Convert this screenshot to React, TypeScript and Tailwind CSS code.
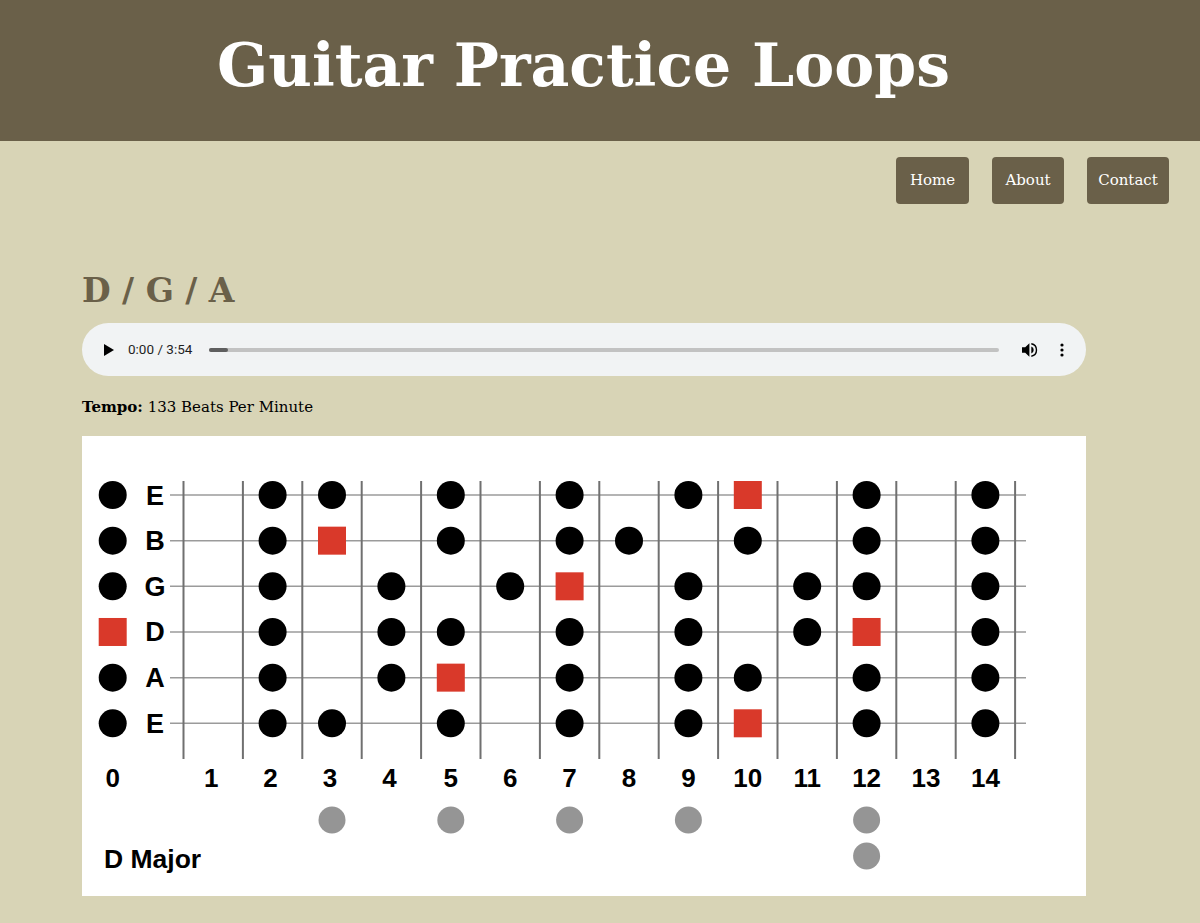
import React from 'react'

const serif = { fontFamily: '"DejaVu Serif", Georgia, serif' }
const sans = { fontFamily: '"Liberation Sans", Arial, sans-serif' }

const fretX = (i: number) => 101.5 + 59.4 * i
const noteX = (n: number) => (n === 0 ? 30.7 : fretX(n) - 29.7)
const stringY = (s: number) => 59 + 45.66 * s

// D major, high E string first. roots drawn as squares
const strings = [
    { name: 'E', notes: [0, 2, 3, 5, 7, 9, 10, 12, 14], roots: [10] },
    { name: 'B', notes: [0, 2, 3, 5, 7, 8, 10, 12, 14], roots: [3] },
    { name: 'G', notes: [0, 2, 4, 6, 7, 9, 11, 12, 14], roots: [7] },
    { name: 'D', notes: [0, 2, 4, 5, 7, 9, 11, 12, 14], roots: [0, 12] },
    { name: 'A', notes: [0, 2, 4, 5, 7, 9, 10, 12, 14], roots: [5] },
    { name: 'E', notes: [0, 2, 3, 5, 7, 9, 10, 12, 14], roots: [10] },
]

function Fretboard() {
    return (
        <svg width="1004" height="460" viewBox="0 0 1004 460" className="block">
            {strings.map((s, i) => (
                <line key={'s' + i} x1={88} x2={944} y1={stringY(i)} y2={stringY(i)} stroke="#9b9b9b" strokeWidth={1.5} />
            ))}
            {Array.from({ length: 15 }, (_, i) => (
                <line key={'f' + i} x1={fretX(i)} x2={fretX(i)} y1={45} y2={323} stroke="#707070" strokeWidth={2} />
            ))}
            {strings.map((s, i) => (
                <g key={'n' + i}>
                    <text x={73} y={stringY(i) + 9.5} textAnchor="middle" fontSize={27} fontWeight={700} style={sans} fill="#000">
                        {s.name}
                    </text>
                    {s.notes.map((n) =>
                        s.roots.includes(n) ? (
                            <rect key={n} x={noteX(n) - 14} y={stringY(i) - 14} width={28} height={28} fill="#d9392a" />
                        ) : (
                            <circle key={n} cx={noteX(n)} cy={stringY(i)} r={14} fill="#000" />
                        )
                    )}
                </g>
            ))}
            {Array.from({ length: 15 }, (_, n) => (
                <text key={'l' + n} x={noteX(n) - (n > 0 && n < 5 ? 2 : 0)} y={351} textAnchor="middle" fontSize={26} fontWeight={700} style={sans} fill="#000">
                    {n}
                </text>
            ))}
            {[3, 5, 7, 9, 12].map((n) => (
                <circle key={'m' + n} cx={noteX(n)} cy={384} r={13.5} fill="#959595" />
            ))}
            <circle cx={noteX(12)} cy={420} r={13.5} fill="#959595" />
            <text x={22} y={432} fontSize={26.5} fontWeight={700} style={sans} fill="#000">
                D Major
            </text>
        </svg>
    )
}

function AudioBar() {
    return (
        <div className="flex h-[53px] items-center rounded-full bg-[#f1f3f4] pl-[22px] pr-[22px]">
            <svg width="10" height="12" viewBox="0 0 10 12">
                <path d="M0 0 L10 6 L0 12 Z" fill="#000" />
            </svg>
            <span className="ml-[14px] text-[13.5px] text-[#1f1f1f]" style={{ fontFamily: 'Roboto, "Liberation Sans", sans-serif' }}>
                0:00 / 3:54
            </span>
            <div className="ml-[17px] mr-[23px] h-[4px] flex-1 rounded-full bg-[#c2c2c2]">
                <div className="h-full w-[19px] rounded-full bg-[#5f5f5f]" />
            </div>
            <svg width="16" height="16" viewBox="0 0 16 16">
                <path d="M0 5.2h3.2L7.4 1.3v13.4L3.2 10.8H0z" fill="#000" />
                <path d="M9.3 4.6a3.6 3.6 0 0 1 0 6.8z" fill="#000" />
                <path d="M9.3 1.8a6.3 6.3 0 0 1 0 12.4" fill="none" stroke="#000" strokeWidth={1.4} />
            </svg>
            <svg width="4" height="14" viewBox="0 0 4 14" className="ml-[22px]">
                <circle cx="2" cy="2" r="1.6" fill="#000" />
                <circle cx="2" cy="7" r="1.6" fill="#000" />
                <circle cx="2" cy="12" r="1.6" fill="#000" />
            </svg>
        </div>
    )
}

export default function App() {
    const links = [
        { label: 'Home', w: 'w-[73px]' },
        { label: 'About', w: 'w-[72px]' },
        { label: 'Contact', w: 'w-[82px]' },
    ]

    return (
        <div className="min-h-[923px] bg-[#d8d4b6]" style={serif}>
            {/* Header */}
            <header className="flex h-[141px] items-center justify-center bg-[#6a6049] pb-[12px] pr-[33px]">
                <h1 className="text-[60px] font-bold leading-none text-white">Guitar Practice Loops</h1>
            </header>

            {/* Nav */}
            <nav className="flex justify-end gap-[23px] pr-[31px] pt-[16px]">
                {links.map((l) => (
                    <a
                        key={l.label}
                        href="#"
                        className={`flex h-[47px] items-center justify-center rounded-[4px] bg-[#6a6049] text-[15px] text-white ${l.w}`}
                    >
                        {l.label}
                    </a>
                ))}
            </nav>

            <main className="ml-[82px] w-[1004px] pb-[27px]">
                <h2 className="mt-[70px] text-[33px] font-bold leading-none text-[#6a6049]">D / G / A</h2>
                <div className="mt-[16px]">
                    <AudioBar />
                </div>
                <p className="mt-[24px] text-[15px] leading-none text-black">
                    <span className="font-bold">Tempo:</span> 133 Beats Per Minute
                </p>
                <div className="mt-[21px] bg-white">
                    <Fretboard />
                </div>
            </main>
        </div>
    )
}
